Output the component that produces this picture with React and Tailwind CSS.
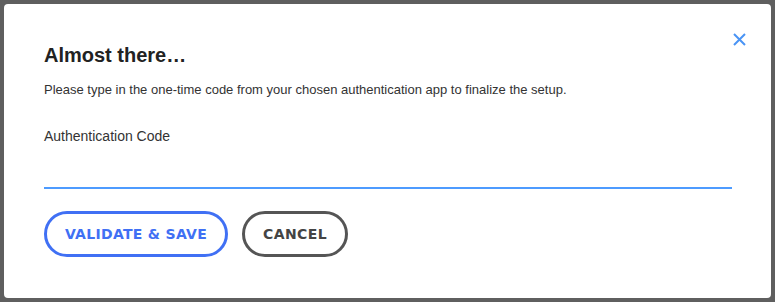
// Two-factor setup — final step modal: enter the one-time code and save

export default function App() {
  return (
    <div className="w-[775px] h-[302px] bg-[#5f5f5f] p-1 font-['Liberation_Sans',Arial,sans-serif]">
      <div className="relative w-[767px] h-[294px] bg-white rounded pl-10 pr-[39px] pt-[37px]">
        {/* Close */}
        <button className="absolute top-[28px] right-[25px] w-[14px] h-[14px] flex items-center justify-center text-[#4a94f5]">
          <svg width="13" height="13" viewBox="0 0 13 13" fill="none" stroke="currentColor" strokeWidth="2">
            <path d="M1 1L12 12M12 1L1 12" />
          </svg>
        </button>

        {/* Header */}
        <h2 className="text-[20px] leading-[28px] font-bold text-[#222]">Almost there…</h2>
        <p className="mt-3 text-[13px] leading-[18px] text-[#333]">
          Please type in the one-time code from your chosen authentication app to finalize the setup.
        </p>

        {/* Field */}
        <label className="block mt-[27px] text-[14px] leading-5 text-[#333]">Authentication Code</label>
        <input
          type="text"
          className="block w-[688px] h-[43px] border-b-2 border-[#4d9bff] outline-none text-[14px] text-[#333] bg-transparent"
        />

        {/* Actions */}
        <div className="flex gap-[14px] mt-[22px] font-['DejaVu_Sans',sans-serif]">
          <button className="w-[184px] h-[46px] rounded-full border-[3px] border-[#4070f4] text-[#4070f4] text-[14px] font-bold tracking-[0.3px] uppercase">
            Validate &amp; Save
          </button>
          <button className="w-[106px] h-[46px] rounded-full border-[3px] border-[#555] text-[#444] text-[14px] font-bold tracking-[0.4px] uppercase">
            Cancel
          </button>
        </div>
      </div>
    </div>
  )
}
